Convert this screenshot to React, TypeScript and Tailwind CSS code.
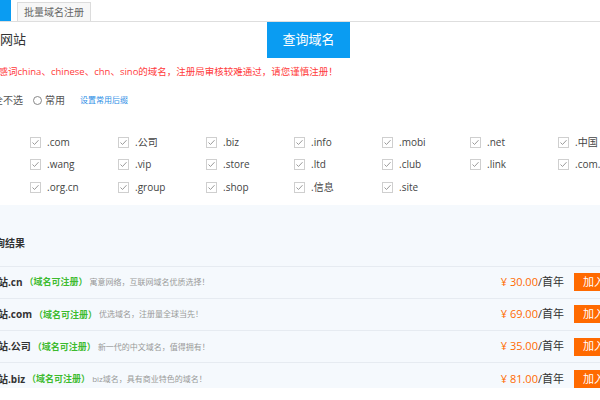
import React from "react";

const suffixes = [
  [".com", ".公司", ".biz", ".info", ".mobi", ".net", ".中国"],
  [".wang", ".vip", ".store", ".ltd", ".club", ".link", ".com.cn"],
  [".org.cn", ".group", ".shop", ".信息", ".site"],
];

const results = [
  { name: "网站.cn", desc: "寓意网络，互联网域名优质选择！", price: "30.00" },
  { name: "网站.com", desc: "优选域名，注册量全球当先！", price: "69.00" },
  { name: "网站.公司", desc: "新一代的中文域名，值得拥有！", price: "35.00" },
  { name: "网站.biz", desc: "biz域名，具有商业特色的域名！", price: "81.00" },
];

function CheckBox() {
  return (
    <svg width="11" height="11" viewBox="0 0 11 11" className="shrink-0">
      <rect x="0.5" y="0.5" width="10" height="10" fill="#fff" stroke="#cfcfcf" />
      <polyline points="2.5,5.5 4.5,7.5 8.5,3.2" fill="none" stroke="#9a9a9a" strokeWidth="1" />
    </svg>
  );
}

export default function App() {
  return (
    <div className="w-[600px] h-[400px] overflow-hidden bg-white font-['Open_Sans','Noto_Sans_CJK_SC',sans-serif] text-[#333]">
      {/* tabs */}
      <div className="flex items-end h-[22px] border-b border-[#dedede] gap-[6px]">
        <div className="w-[11px] h-[21px] bg-[#0a9cf2]" />
        <div className="h-[19px] px-[6px] border border-b-0 border-[#dcdcdc] bg-[#f7f7f7] text-[10px] leading-[18px] text-[#666]">
          批量域名注册
        </div>
      </div>

      {/* search */}
      <div className="flex h-[36px]">
        <div className="w-[267px] flex items-center text-[13px] text-[#333]">网站</div>
        <button className="w-[83px] h-[36px] bg-[#0a9cf2] text-white text-[13px]">查询域名</button>
      </div>

      {/* warning */}
      <div className="-ml-[30px] mt-[6px] h-[16px] leading-[16px] text-[9.5px] text-[#ff3b3b] whitespace-nowrap">
        含有敏感词china、chinese、chn、sino的域名，注册局审核较难通过，请您谨慎注册！
      </div>

      {/* options */}
      <div className="-ml-[7px] mt-[13px] h-[14px] flex items-center text-[10px] text-[#555] whitespace-nowrap">
        <span>全不选</span>
        <span className="ml-[10px] w-[9px] h-[9px] rounded-full border border-[#888]" />
        <span className="ml-[3px]">常用</span>
        <span className="ml-[15px] text-[8px] text-[#2d8ee6]">设置常用后缀</span>
      </div>

      {/* suffix grid */}
      <div className="mt-[24px] pl-[30px] flex flex-col">
        {suffixes.map((row, i) => (
          <div key={i} className="grid grid-cols-[repeat(7,88px)] h-[22.5px] items-center">
            {row.map((s) => (
              <div key={s} className="flex items-center gap-[6px] text-[10px] text-[#444] whitespace-nowrap">
                <CheckBox />
                <span>{s}</span>
              </div>
            ))}
          </div>
        ))}
      </div>

      {/* results */}
      <div className="mt-[6px] h-[183px] overflow-hidden bg-[#f5f9fd]">
        <div className="h-[61px] pt-[30px] -ml-[15px] text-[10px] leading-[16px] font-bold text-[#333]">
          查询结果
        </div>
        {results.map((r) => (
          <div key={r.name} className="flex items-center h-[32.3px] border-t border-[#e6ebf1] whitespace-nowrap">
            <div className="-ml-[12px] flex items-center">
              <span className="text-[10px] font-bold text-[#333]">{r.name}</span>
              <span className="ml-[2px] text-[9px] font-semibold text-[#3dbb2f]">（域名可注册）</span>
              <span className="ml-[2px] text-[8px] text-[#999]">{r.desc}</span>
            </div>
            <div className="flex-1" />
            <div className="text-[11px]">
              <span className="text-[#ff6a00]">¥ {r.price}</span>
              <span className="text-[#333]">/首年</span>
            </div>
            <button className="ml-[10px] -mr-[20px] w-[46px] h-[18px] pl-[9px] text-left bg-[#ff6a00] text-white text-[11px]">
              加入
            </button>
          </div>
        ))}
      </div>
    </div>
  );
}
